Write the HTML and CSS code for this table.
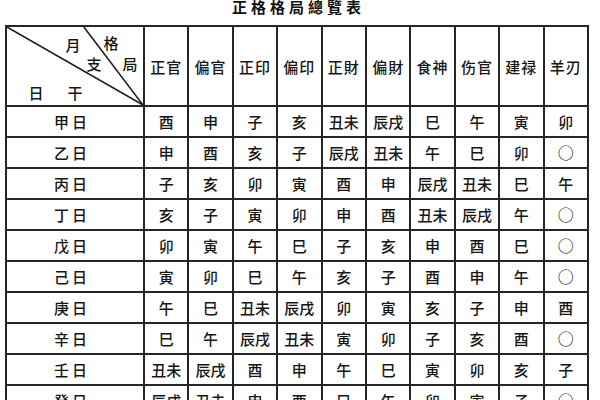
FILE: index.html
```html
<!DOCTYPE html>
<html lang="zh">
<head>
<meta charset="utf-8">
<link rel="stylesheet" href="styles.css">
</head>
<body>
<div class="page">
  <h1 class="title">正格格局總覽表</h1>
  <table class="grid">
    <colgroup>
      <col class="c-day">
      <col span="10" class="c-val">
    </colgroup>
    <thead>
      <tr>
        <th class="corner">
          <svg class="diag" viewBox="0 0 138 81" preserveAspectRatio="none">
            <line x1="0" y1="0" x2="138" y2="81"/>
            <line x1="78" y1="0" x2="138" y2="81"/>
          </svg>
          <span class="lbl l-yue">月</span>
          <span class="lbl l-zhi">支</span>
          <span class="lbl l-ge">格</span>
          <span class="lbl l-ju">局</span>
          <span class="lbl l-ri">日</span>
          <span class="lbl l-gan">干</span>
        </th>
        <th>正官</th><th>偏官</th><th>正印</th><th>偏印</th><th>正財</th><th>偏財</th><th>食神</th><th>伤官</th><th>建禄</th><th>羊刃</th>
      </tr>
    </thead>
    <tbody>
      <tr><td class="day">甲日</td><td>酉</td><td>申</td><td>子</td><td>亥</td><td>丑未</td><td>辰戌</td><td>巳</td><td>午</td><td>寅</td><td>卯</td></tr>
      <tr><td class="day">乙日</td><td>申</td><td>酉</td><td>亥</td><td>子</td><td>辰戌</td><td>丑未</td><td>午</td><td>巳</td><td>卯</td><td class="o">○</td></tr>
      <tr><td class="day">丙日</td><td>子</td><td>亥</td><td>卯</td><td>寅</td><td>酉</td><td>申</td><td>辰戌</td><td>丑未</td><td>巳</td><td>午</td></tr>
      <tr><td class="day">丁日</td><td>亥</td><td>子</td><td>寅</td><td>卯</td><td>申</td><td>酉</td><td>丑未</td><td>辰戌</td><td>午</td><td class="o">○</td></tr>
      <tr><td class="day">戊日</td><td>卯</td><td>寅</td><td>午</td><td>巳</td><td>子</td><td>亥</td><td>申</td><td>酉</td><td>巳</td><td class="o">○</td></tr>
      <tr><td class="day">己日</td><td>寅</td><td>卯</td><td>巳</td><td>午</td><td>亥</td><td>子</td><td>酉</td><td>申</td><td>午</td><td class="o">○</td></tr>
      <tr><td class="day">庚日</td><td>午</td><td>巳</td><td>丑未</td><td>辰戌</td><td>卯</td><td>寅</td><td>亥</td><td>子</td><td>申</td><td>酉</td></tr>
      <tr><td class="day">辛日</td><td>巳</td><td>午</td><td>辰戌</td><td>丑未</td><td>寅</td><td>卯</td><td>子</td><td>亥</td><td>酉</td><td class="o">○</td></tr>
      <tr><td class="day">壬日</td><td>丑未</td><td>辰戌</td><td>酉</td><td>申</td><td>午</td><td>巳</td><td>寅</td><td>卯</td><td>亥</td><td>子</td></tr>
      <tr><td class="day">癸日</td><td>辰戌</td><td>丑未</td><td>申</td><td>酉</td><td>巳</td><td>午</td><td>卯</td><td>寅</td><td>子</td><td class="o">○</td></tr>
    </tbody>
  </table>
</div>
</body>
</html>
```

FILE: styles.css
```css
html, body {
  margin: 0;
  padding: 0;
  background: #ffffff;
}

body {
  font-family: "Noto Sans CJK TC", "Noto Sans CJK SC", sans-serif;
  color: #161616;
  overflow: hidden;
  width: 600px;
  height: 400px;
}

.page {
  padding-left: 5px;
}

.title {
  margin: 0;
  height: 25px;
  padding-left: 227px;
  font-size: 15px;
  font-weight: 700;
  line-height: 14px;
  letter-spacing: 4px;
  color: #111;
}

.grid {
  border-collapse: collapse;
  table-layout: fixed;
  width: 584px;
  border: 2px solid #1c1c1c;
}

.c-day { width: 138px; }

.grid th,
.grid td {
  border: 2px solid #262626;
  padding: 0;
  text-align: center;
  vertical-align: middle;
  font-size: 15px;
  font-weight: 500;
  white-space: nowrap;
  overflow: hidden;
}

.grid thead th {
  height: 78px;
  letter-spacing: 1px;
}

.grid tbody td {
  height: 29px;
  line-height: 29px;
}

.grid td.day {
  letter-spacing: 3px;
  padding-right: 6px;
}

.grid td.o {
  font-size: 16px;
}

.corner {
  position: relative;
}

.diag {
  position: absolute;
  left: 0;
  top: 0;
  width: 100%;
  height: 100%;
}

.diag line {
  stroke: #1c1c1c;
  stroke-width: 1.6;
}

.lbl {
  position: absolute;
  width: 16px;
  height: 16px;
  line-height: 16px;
  margin-left: -8px;
  margin-top: -8px;
  font-size: 15px;
  font-weight: 500;
  letter-spacing: 0;
}

.l-yue { left: 66px; top: 18px; }
.l-zhi { left: 87px; top: 37px; }
.l-ge  { left: 104px; top: 16px; }
.l-ju  { left: 123px; top: 37px; }
.l-ri  { left: 29px; top: 66px; }
.l-gan { left: 68px; top: 66px; }
```
